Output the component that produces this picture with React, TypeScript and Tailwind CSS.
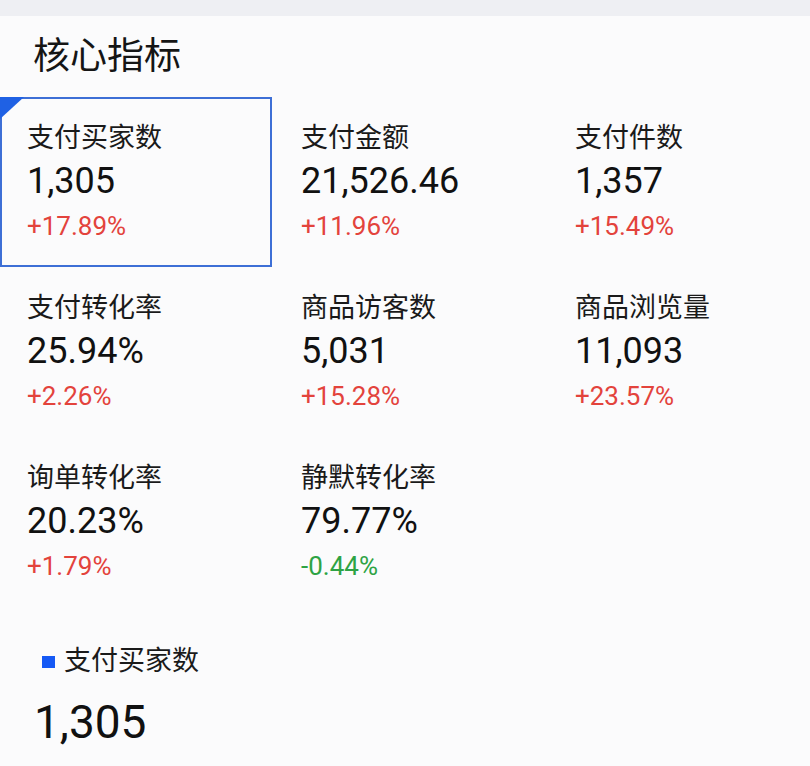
import React from "react";

type Item = { label: string; value: string; change: string; up: boolean };

const items: Item[] = [
  { label: "支付买家数", value: "1,305", change: "+17.89%", up: true },
  { label: "支付金额", value: "21,526.46", change: "+11.96%", up: true },
  { label: "支付件数", value: "1,357", change: "+15.49%", up: true },
  { label: "支付转化率", value: "25.94%", change: "+2.26%", up: true },
  { label: "商品访客数", value: "5,031", change: "+15.28%", up: true },
  { label: "商品浏览量", value: "11,093", change: "+23.57%", up: true },
  { label: "询单转化率", value: "20.23%", change: "+1.79%", up: true },
  { label: "静默转化率", value: "79.77%", change: "-0.44%", up: false },
];

export default function App() {
  return (
    <div
      className="w-[810px] h-[766px] overflow-hidden bg-[#fbfbfc] text-[#151515]"
      style={{ fontFamily: "Roboto, 'Noto Sans CJK SC', sans-serif" }}
    >
      <div className="h-[16px] bg-[#eeeff3]" />
      <div className="pl-[33px] mt-[22px] text-[37px] leading-[37px]">核心指标</div>
      <div className="grid grid-cols-[274px_274px_262px] mt-[22px]">
        {items.map((it, i) => (
          <div
            key={it.label}
            className={
              i === 0
                ? "relative h-[170px] w-[272px] border-2 border-[#3d6fd6] pl-[25px] pt-[26px] flex flex-col items-start"
                : "relative h-[170px] border-2 border-transparent pl-[25px] pt-[26px] flex flex-col items-start"
            }
          >
            {i === 0 && (
              <svg className="absolute -left-[2px] -top-[2px]" width="24" height="22" viewBox="0 0 24 22">
                <polygon points="0,0 24,0 0,22" fill="#1f61e4" />
              </svg>
            )}
            <div className="text-[27px] leading-[27px] text-[#1a1a1a]">{it.label}</div>
            <div className="mt-[11px] text-[36px] leading-[36px] text-[#111]">{it.value}</div>
            <div
              className={
                it.up
                  ? "mt-[14px] text-[26px] leading-[26px] text-[#e3433c]"
                  : "mt-[14px] text-[26px] leading-[26px] text-[#2ea344]"
              }
            >
              {it.change}
            </div>
          </div>
        ))}
      </div>
      <div className="mt-[41px] pl-[42px] flex items-center gap-[9px]">
        <div className="w-[13px] h-[12px] bg-[#1559f5]" />
        <div className="text-[27px] leading-[27px] text-[#1a1a1a]">支付买家数</div>
      </div>
      <div className="mt-[24px] pl-[34px] text-[46px] leading-[46px] text-[#111]">1,305</div>
    </div>
  );
}
